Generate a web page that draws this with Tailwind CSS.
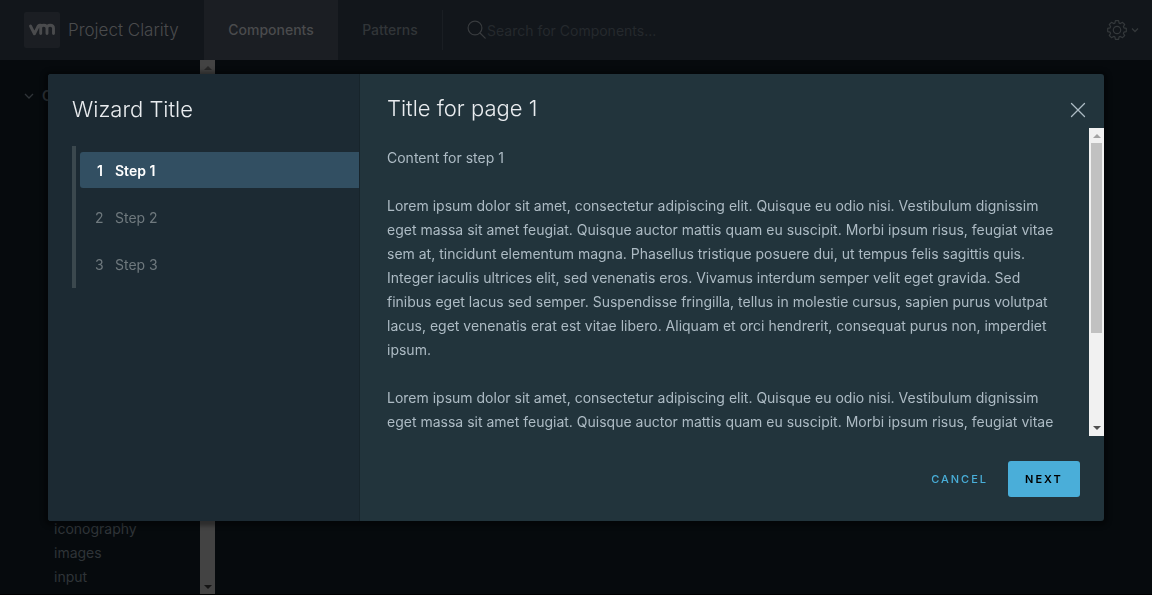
<!DOCTYPE html>
<html lang="en">
<head>
<meta charset="utf-8">
<title>Project Clarity</title>
<script src="https://cdn.jsdelivr.net/npm/@tailwindcss/browser@4"></script>
</head>
<body class="h-screen overflow-hidden bg-[#060a0d] font-['Inter',sans-serif] text-sm text-[#2f3438]">
<div class="flex h-full flex-col">
  <header class="flex h-15 shrink-0 items-stretch bg-[#12161b] pr-3">
    <a href="#" class="flex w-51 items-center gap-2 pl-6 text-[17px] font-light text-[#4a4b4d]">
      <span class="flex size-9 items-center justify-center rounded-xs bg-[#1b1e23]">
        <svg class="w-7 h-3.5" viewBox="0 0 28 14" fill="none" stroke="currentColor" stroke-width="2.900" stroke-linecap="round" stroke-linejoin="round" role="img" aria-label="vm"><path d="M2.500 3l3.900 7.800L10.300 3q.4-.8 1.400-.8h1v8.300M12.700 5.300c0-4.100 6.300-4.100 6.300 0v5.200M19 5.300c0-4.100 6.500-4.100 6.500 0v5.200"/></svg>
      </span>
      <span class="whitespace-nowrap">Project Clarity</span>
    </a>
    <nav class="flex items-stretch">
      <a href="#" class="flex w-[134px] items-center justify-center bg-[#1b1e23] font-medium text-[#4a4b4d]">Components</a>
      <a href="#" class="flex w-[104px] items-center justify-center font-medium text-[#313538]">Patterns</a>
    </nav>
    <label class="my-2.5 flex flex-1 items-center border-l border-[#1a1e23] pl-6">
      <svg class="size-5 shrink-0 text-[#383b3e]" viewBox="0 0 20 20" fill="none" stroke="currentColor" stroke-width="1.2" stroke-linecap="round"><circle cx="8" cy="8" r="6.9"/><path d="M13 13l5.2 5.2"/></svg>
      <input type="search" aria-label="Search for Components" placeholder="Search for Components..." class="w-60 bg-transparent pt-0.5 text-sm outline-none placeholder:text-[#25292d]">
    </label>
    <button aria-label="Settings" class="flex items-center gap-[3px] text-[#34383b]">
      <svg class="size-5" viewBox="0 0 20 20" fill="none" stroke="currentColor" stroke-width="1.2" stroke-linejoin="round"><circle cx="10" cy="10" r="3.7"/><path d="M8.4 .7h3.2l.5 2.4 1.3.5 2.1-1.3 2.2 2.2-1.3 2.1.5 1.3 2.4.5v3.2l-2.4.5-.5 1.3 1.3 2.1-2.2 2.2-2.1-1.3-1.3.5-.5 2.4H8.4l-.5-2.4-1.3-.5-2.1 1.3-2.2-2.2 1.3-2.1-.5-1.3-2.4-.5V8.400l2.400-.5.5-1.300-1.300-2.100 2.200-2.200 2.100 1.300 1.300-.5z"/></svg>
      <svg class="size-2.5" viewBox="0 0 10 10" fill="none" stroke="currentColor" stroke-width="1.3"><path d="M2 3.500l3 3 3-3"/></svg>
    </button>
  </header>
  <div class="flex min-h-0 flex-1 border-b border-black">
    <aside class="flex w-[215px]">
      <nav class="flex flex-1 flex-col justify-between pb-[5px]">
        <a href="#" class="flex items-center gap-2 pt-6 pl-6 leading-6 font-semibold">
          <svg class="size-2.5" viewBox="0 0 10 10" fill="none" stroke="currentColor" stroke-width="1.3"><path d="M1 3l4 4 4-4"/></svg>
          C
        </a>
        <ul class="pl-13.5 leading-6">
          <li><a href="#">iconography</a></li>
          <li><a href="#">images</a></li>
          <li><a href="#">input</a></li>
        </ul>
      </nav>
      <div class="flex w-[15px] flex-col items-center justify-between bg-[#434343] pt-1.5 pb-[5px]">
        <svg class="h-1 w-2" viewBox="0 0 8 4"><path d="M4 0l4 4H0z" fill="#282828"/></svg>
        <svg class="h-1 w-2" viewBox="0 0 8 4"><path d="M4 4L0 0h8z" fill="#151515"/></svg>
      </div>
    </aside>
  </div>
</div>

<div class="fixed inset-0 flex items-center justify-center px-12">
  <section role="dialog" aria-labelledby="page-title" class="flex h-[75vh] w-full rounded-[3px] bg-[#22343c] shadow-[0_1px_4px_4px_rgba(0,0,0,0.35)]">
    <aside class="flex w-78 shrink-0 flex-col rounded-l-[3px] border-r border-[#17242b] bg-[#1c2a33] pl-6">
      <h1 class="pt-[19px] text-[22px] leading-8 font-light text-[#e9ecef]">Wizard Title</h1>
      <ol class="mt-[21px] flex flex-col gap-[11px] border-l-4 border-[#3b484e] py-1.5 pl-1 text-[#6f797e]">
        <li><button aria-current="step" class="flex h-9 w-full items-center rounded-l-[3px] bg-[#324f62] pt-0.5 pl-[15px] text-left font-semibold text-white"><span class="w-5 pl-0.5 text-left">1</span>Step 1</button></li>
        <li><button class="flex h-9 w-full items-center pt-0.5 pl-[15px] text-left"><span class="w-5 text-left">2</span>Step 2</button></li>
        <li><button class="flex h-9 w-full items-center pt-0.5 pl-[15px] text-left"><span class="w-5 text-left">3</span>Step 3</button></li>
      </ol>
    </aside>
    <div class="flex min-w-0 flex-1 flex-col">
      <header class="flex h-[54px] shrink-0 items-end justify-between pr-4.5 pl-[27px]">
        <h2 id="page-title" class="pb-1 text-[22px] leading-8 font-light text-[#e9ecef]">Title for page 1</h2>
        <button aria-label="Close" class="pb-2.5 text-[#adbbc4]">
          <svg class="size-4" viewBox="0 0 16 16" fill="none" stroke="currentColor" stroke-width="1.3" stroke-linecap="round"><path d="M1.500 1.500l13 13M14.500 1.500l-13 13"/></svg>
        </button>
      </header>
      <div class="flex min-h-0 flex-1">
        <div class="flex-1 space-y-6 overflow-hidden pt-4.5 pl-[27px] leading-6 whitespace-nowrap text-[#adbbc4]">
          <p>Content for step 1</p>
          <p>Lorem ipsum dolor sit amet, consectetur adipiscing elit. Quisque eu odio nisi. Vestibulum dignissim<br>eget massa sit amet feugiat. Quisque auctor mattis quam eu suscipit. Morbi ipsum risus, feugiat vitae<br>sem at, tincidunt elementum magna. Phasellus tristique posuere dui, ut tempus felis sagittis quis.<br>Integer iaculis ultrices elit, sed venenatis eros. Vivamus interdum semper velit eget gravida. Sed<br>finibus eget lacus sed semper. Suspendisse fringilla, tellus in molestie cursus, sapien purus volutpat<br>lacus, eget venenatis erat est vitae libero. Aliquam et orci hendrerit, consequat purus non, imperdiet<br>ipsum.</p>
          <p>Lorem ipsum dolor sit amet, consectetur adipiscing elit. Quisque eu odio nisi. Vestibulum dignissim<br>eget massa sit amet feugiat. Quisque auctor mattis quam eu suscipit. Morbi ipsum risus, feugiat vitae</p>
        </div>
        <div class="flex w-[15px] flex-col items-center bg-[#f1f1f1] py-1.5">
          <svg class="h-1 w-2 shrink-0" viewBox="0 0 8 4"><path d="M4 0l4 4H0z" fill="#a3a3a3"/></svg>
          <div class="mt-[5px] h-[190px] w-[11px] bg-[#c1c1c1]"></div>
          <svg class="mt-auto h-1 w-2 shrink-0" viewBox="0 0 8 4"><path d="M4 4L0 0h8z" fill="#505050"/></svg>
        </div>
      </div>
      <footer class="flex shrink-0 justify-end gap-1 px-6 pt-[25px] pb-6 text-[11px] font-medium tracking-[2px]">
        <button class="h-9 px-4 pt-0.5 text-[#49afd9]">CANCEL</button>
        <button class="h-9 w-18 rounded-[3px] bg-[#4aaed9] pt-0.5 font-semibold text-black">NEXT</button>
      </footer>
    </div>
  </section>
</div>
</body>
</html>
